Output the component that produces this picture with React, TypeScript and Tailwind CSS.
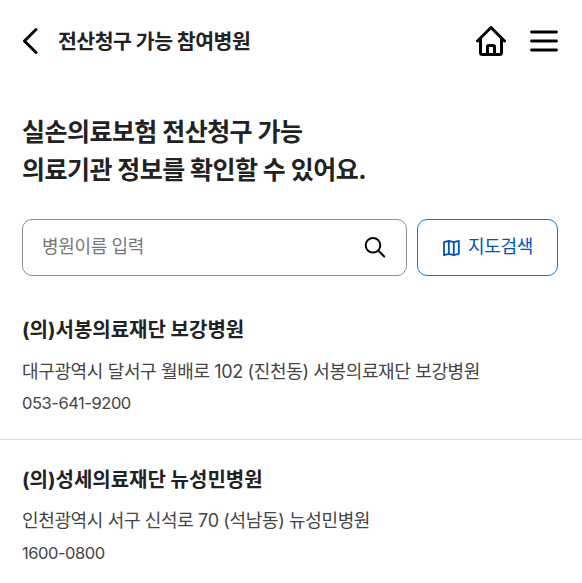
const hospitals = [
	{
		name: "(의)서봉의료재단 보강병원",
		address: "대구광역시 달서구 월배로 102 (진천동) 서봉의료재단 보강병원",
		tel: "053-641-9200",
	},
	{
		name: "(의)성세의료재단 뉴성민병원",
		address: "인천광역시 서구 신석로 70 (석남동) 뉴성민병원",
		tel: "1600-0800",
	},
];

const Header = () => {
	return (
		<header className="flex h-[82px] items-center justify-between pr-6 pl-[22px]">
			<div className="flex items-center gap-5">
				<button aria-label="뒤로">
					<svg
						width="16"
						height="28"
						viewBox="0 0 16 28"
						fill="none"
						stroke="#000"
						strokeWidth="3"
						strokeLinecap="round"
						strokeLinejoin="round"
					>
						<path d="M14 2.5 2.5 14 14 25.5" />
					</svg>
				</button>
				<h1 className="pt-0.5 text-[20.5px] font-bold tracking-[-0.5px]">전산청구 가능 참여병원</h1>
			</div>
			<div className="flex items-center gap-6">
				<button aria-label="홈">
					<svg
						width="30"
						height="30"
						viewBox="0 0 30 30"
						fill="none"
						stroke="#000"
						strokeWidth="3"
						strokeLinecap="round"
						strokeLinejoin="round"
					>
						<path d="M1.5 15 15 1.5 28.5 15" />
						<path d="M4.5 13v13.5a2 2 0 0 0 2 2h17a2 2 0 0 0 2-2V13" />
						<path d="M11.5 28v-7.5a1 1 0 0 1 1-1h5a1 1 0 0 1 1 1V28" />
					</svg>
				</button>
				<button aria-label="메뉴">
					<svg
						width="28"
						height="22"
						viewBox="0 0 28 22"
						stroke="#000"
						strokeWidth="2.8"
						strokeLinecap="round"
					>
						<path d="M1.5 2h25M1.5 11h25M1.5 20h25" />
					</svg>
				</button>
			</div>
		</header>
	);
};

export default function App() {
	return (
		<div className="h-[583px] overflow-hidden bg-white font-['Inter','Noto_Sans_CJK_KR',sans-serif] text-[#222]">
			<Header />
			<h2 className="px-[22px] pt-[31px] text-[25px] leading-[38px] font-bold tracking-[-0.53px]">
				실손의료보험 전산청구 가능
				<br />
				의료기관 정보를 확인할 수 있어요.
			</h2>

			{/* search */}
			<div className="flex gap-[10px] pt-[30px] pr-6 pl-[22px]">
				<div className="flex h-[57px] w-[385px] items-center justify-between rounded-[10px] border border-[#8e8e8e] pr-5 pl-[19px]">
					<span className="pb-0.5 text-[18px] tracking-[-0.35px] text-[#767676]">병원이름 입력</span>
					<svg width="22" height="22" viewBox="0 0 22 22" fill="none" stroke="#000" strokeWidth="2">
						<circle cx="9" cy="8.3" r="7.3" />
						<path d="m14.2 13.5 6 6" strokeLinecap="round" />
					</svg>
				</div>
				<button className="flex h-[57px] flex-1 items-center justify-center gap-2 rounded-[10px] border border-[#1a6fe0] text-[18px] tracking-[-0.35px] text-[#0052b4]">
					<svg
						width="18"
						height="18"
						viewBox="0 0 18 18"
						fill="none"
						stroke="currentColor"
						strokeWidth="1.8"
						strokeLinejoin="round"
					>
						<path d="M2 3.2 6.8 1.8l5 1.4 5-1.4v13l-5 1.4-5-1.4L2 16.2zM6.8 1.8v13M11.8 3.2v13" />
					</svg>
					<span className="pb-0.5">지도검색</span>
				</button>
			</div>

			{/* hospital list */}
			<ul>
				{hospitals.map((item) => (
					<li
						key={item.name}
						className="border-b border-[#ddd] px-[22px] pt-[24.9px] pb-6 first:pt-[39px]"
					>
						<h3 className="text-[20px] leading-[30px] font-bold">{item.name}</h3>
						<p className="mt-[12.5px] text-[18px] leading-[27px] tracking-[-0.36px] text-[#444]">
							{item.address}
						</p>
						<p className="mt-[6.5px] text-[16.5px] leading-6 tracking-[-0.45px] text-[#444]">
							{item.tel}
						</p>
					</li>
				))}
			</ul>
		</div>
	);
}
